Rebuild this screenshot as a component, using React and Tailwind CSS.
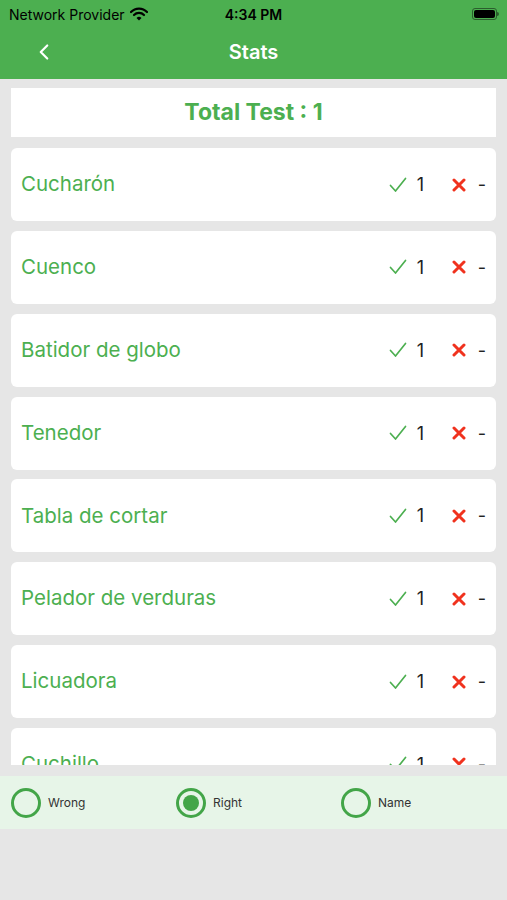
import { ChevronLeft } from "lucide-react";

const items = [
  "Cucharón",
  "Cuenco",
  "Batidor de globo",
  "Tenedor",
  "Tabla de cortar",
  "Pelador de verduras",
  "Licuadora",
  "Cuchillo",
];

const StatRow = ({ name }) => {
  return (
    <div className="h-[73px] shrink-0 bg-white rounded-[6px] flex items-center pl-[10px] pr-[10px]">
      <span className="text-[20.5px] text-[#4caf50] flex-1">{name}</span>
      <svg width="18" height="16" viewBox="0 0 18 16" className="mr-[10px]">
        <path d="M1.5 8.5 L6.5 14 L16.5 1.5" fill="none" stroke="#4caf50" strokeWidth="1.7" strokeLinecap="round" strokeLinejoin="round" />
      </svg>
      <span className="text-[18px] text-[#222] w-[35px]">1</span>
      <svg width="14" height="14" viewBox="0 0 14 14" className="mr-[12px]">
        <path d="M2 2 L12 12 M12 2 L2 12" fill="none" stroke="#f0321e" strokeWidth="3" strokeLinecap="round" />
      </svg>
      <span className="text-[18px] text-[#222]">-</span>
    </div>
  );
};

const Radio = ({ label, checked }) => {
  return (
    <div className="flex items-center gap-[7px] w-[165px] shrink-0">
      <div className="w-[30px] h-[30px] rounded-full border-[3px] border-[#43a548] flex items-center justify-center">
        {checked && <div className="w-[16px] h-[16px] rounded-full bg-[#43a548]" />}
      </div>
      <span className="text-[12px] text-[#333]">{label}</span>
    </div>
  );
};

export default function App() {
  return (
    <div className="w-[507px] h-[900px] bg-[#e6e6e6] flex flex-col overflow-hidden" style={{ fontFamily: "Inter, 'Liberation Sans', sans-serif" }}>
      <div className="bg-[#4caf50] h-[79px] shrink-0 flex flex-col">
        <div className="h-[28px] flex items-center px-[9px] text-[14px] text-black relative">
          <span>Network Provider</span>
          <svg width="18" height="14" viewBox="0 0 18 14" className="ml-[5px]">
            <path d="M1 5 A11 11 0 0 1 17 5" fill="none" stroke="#000" strokeWidth="2.2" strokeLinecap="round" />
            <path d="M4 8 A7 7 0 0 1 14 8" fill="none" stroke="#000" strokeWidth="2.2" strokeLinecap="round" />
            <path d="M6.5 11 L9 13.5 L11.5 11 A3.5 3.5 0 0 0 6.5 11 Z" fill="#000" />
          </svg>
          <span className="absolute left-1/2 -translate-x-1/2 font-semibold">4:34 PM</span>
          <div className="ml-auto flex items-center mr-[-1px]">
            <div className="w-[25px] h-[12px] rounded-[3px] border border-[#2b5e2d] p-[1px]">
              <div className="w-full h-full bg-black rounded-[2px]" />
            </div>
            <div className="w-[2px] h-[4px] bg-[#2b5e2d] rounded-r" />
          </div>
        </div>
        <div className="flex-1 flex items-center relative pb-[3px]">
          <ChevronLeft className="absolute left-[31px]" size={26} color="white" strokeWidth={2} />
          <span className="mx-auto text-white text-[20px] font-semibold">Stats</span>
        </div>
      </div>
      <div className="px-[11px] pt-[9px] shrink-0">
        <div className="h-[49px] bg-white flex items-center justify-center">
          <span className="text-[23px] font-bold text-[#4caf50]">Total Test : 1</span>
        </div>
      </div>
      <div className="h-[617px] mt-[11px] px-[11px] overflow-hidden flex flex-col gap-[9.85px] shrink-0">
        {items.map((n) => (
          <StatRow key={n} name={n} />
        ))}
      </div>
      <div className="mt-[11px] h-[53px] bg-[#e7f5e8] flex items-center px-[11px] shrink-0">
        <Radio label="Wrong" />
        <Radio label="Right" checked />
        <Radio label="Name" />
      </div>
    </div>
  );
}
